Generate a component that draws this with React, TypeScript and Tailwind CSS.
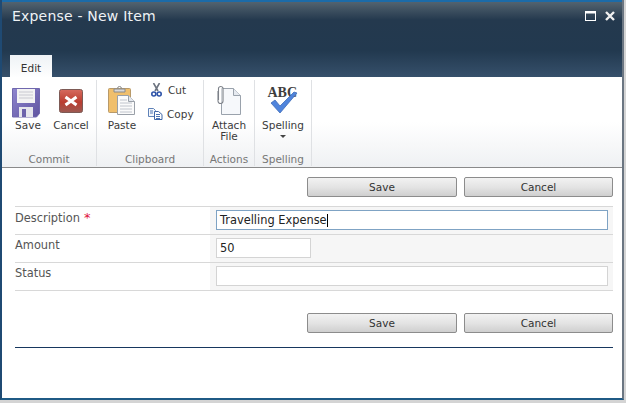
const font = { fontFamily: '"DejaVu Sans", Verdana, sans-serif' };

function SaveIcon() {
  return (
    <svg width="28" height="30" viewBox="0 0 28 30">
      <defs>
        <linearGradient id="sv" x1="0" y1="0" x2="1" y2="1"><stop offset="0" stopColor="#8f86cf" /><stop offset="1" stopColor="#5f549f" /></linearGradient>
      </defs>
      <path d="M.5.5h27v25l-3 3.500H.5z" fill="url(#sv)" stroke="#7068ae" />
      <rect x="5" y="1" width="18" height="14" fill="#f3f3f3" />
      <path d="M7 4h14M7 7h14M7 10h14" stroke="#c9c9d0" />
      <rect x="7" y="19" width="14" height="10" fill="#e6e6ec" />
      <rect x="10" y="21" width="4" height="8" fill="#6d63ab" />
    </svg>
  );
}
function CancelIcon() {
  return (
    <svg width="24" height="24" viewBox="0 0 24 24">
      <defs>
        <linearGradient id="cn" x1="0" y1="0" x2="0" y2="1"><stop offset="0" stopColor="#d66a5e" /><stop offset="0.55" stopColor="#bb3d30" /><stop offset="1" stopColor="#9c5a52" /></linearGradient>
      </defs>
      <rect x="0.5" y="0.5" width="23" height="23" rx="2" fill="url(#cn)" stroke="#7d5a55" />
      <path d="M6.500 8 17.500 16M17.500 8 6.500 16" stroke="#fff" strokeWidth="3" />
    </svg>
  );
}
function PasteIcon() {
  return (
    <svg width="28" height="30" viewBox="0 0 28 30">
      <rect x="0.5" y="3.5" width="22" height="24" rx="1" fill="#f0bf6c" stroke="#b89a6a" />
      <path d="M6 4h11v3H6z" fill="#d8d8d8" stroke="#8a8a8a" />
      <path d="M9.5 3.5a2 2 0 0 1 4 0" fill="none" stroke="#8a8a8a" />
      <path d="M9.5 10.5h11l6 6v13h-17z" fill="#fbfbfb" stroke="#9aa0a8" />
      <path d="M20.5 10.5v6h6" fill="#e4e8ee" stroke="#9aa0a8" />
      <path d="M12 15h7M12 18h12M12 21h12M12 24h12M12 27h12" stroke="#c0c4cc" />
    </svg>
  );
}
function CutIcon() {
  return (
    <svg width="11" height="14" viewBox="0 0 11 14">
      <path d="M2.500 0 7 8M8.500 0 4 8" stroke="#6d7480" strokeWidth="1.6" />
      <circle cx="2.800" cy="11" r="2" fill="none" stroke="#2f54a8" strokeWidth="1.6" />
      <circle cx="8.200" cy="11" r="2" fill="none" stroke="#2f54a8" strokeWidth="1.6" />
    </svg>
  );
}
function CopyIcon() {
  return (
    <svg width="15" height="12" viewBox="0 0 15 12">
      <path d="M.5.5h5l2 2v6h-7z" fill="#f4f7fb" stroke="#5f82b8" />
      <path d="M6.500 3.500h4l3.500 3v5h-7.500z" fill="#fff" stroke="#3f66a8" />
      <path d="M2 3h3M2 5h3M8 6.500h4M8 8.500h4M8 10.500h4" stroke="#4d74b4" />
    </svg>
  );
}
function AttachIcon() {
  return (
    <svg width="26" height="30" viewBox="0 0 26 30">
      <path d="M5.500 3.500h12l7 7v19h-19z" fill="#f6f8fb" stroke="#9aa2ac" />
      <path d="M17.500 3.500v7h7" fill="#e6eaf0" stroke="#9aa2ac" />
      <path d="M2 6v10a2.500 2.500 0 0 0 5 0V3a2.400 2.400 0 0 0-4.500 0v12" fill="#fff" fillOpacity="0.5" stroke="#7c8088" strokeWidth="1.1" />
    </svg>
  );
}
function SpellIcon() {
  return (
    <svg width="32" height="32" viewBox="0 0 32 32">
      <text x="0.500" y="13" fontFamily='"Liberation Serif", serif' fontWeight="700" fontSize="14" fill="#3d3d3d">ABC</text>
      <path d="M4 19l9 10L30 9l-3-1-14 14-5-6z" fill="#4f84dc" stroke="#3f6cb8" strokeWidth="0.8" />
    </svg>
  );
}

function Group({ label, className, children }: { label: string; className: string; children: React.ReactNode }) {
  return (
    <div className={`flex flex-col border-r border-[#dfe1e4] ${className}`}>
      <div className="h-[73px] flex">{children}</div>
      <div className="text-center text-[10.5px] leading-[13px] text-[#777] whitespace-nowrap">{label}</div>
    </div>
  );
}
function Big({ icon, label, className }: { icon: React.ReactNode; label: React.ReactNode; className: string }) {
  return (
    <div className={`flex flex-col items-center text-[10.5px] leading-[11px] text-[#3b3b3b] ${className}`}>
      <div className="h-[33px] flex items-end justify-center">{icon}</div>
      <div className="mt-[2px] text-center whitespace-nowrap">{label}</div>
    </div>
  );
}
function Buttons() {
  const base = "h-[20px] border border-[#8c8c8c] rounded-[2px] bg-gradient-to-b from-[#f2f2f2] via-[#e4e4e4] to-[#cfcfcf] text-[10.5px] leading-[19px] text-center text-[#333]";
  return (
    <div className="flex justify-end gap-[7px] pr-[9px]">
      <div className={`w-[150px] ${base}`}>Save</div>
      <div className={`w-[149px] ${base}`}>Cancel</div>
    </div>
  );
}
function Row({ label, star, bottom, children }: { label: string; star?: boolean; bottom?: boolean; children: React.ReactNode }) {
  return (
    <div className={`flex h-[28px] border-t border-[#d8d8d8] ${bottom ? "border-b h-[29px]" : ""}`}>
      <div className="w-[195px] pt-[3px] text-[11.4px] leading-[15px] text-[#555] whitespace-nowrap">
        {label}{star && <span className="text-[#e0103a] text-[13px]"> *</span>}
      </div>
      <div className="flex-1 bg-[#f6f6f6] pl-[6px] pr-[5px] pt-[3px]">{children}</div>
    </div>
  );
}

export default function App() {
  return (
    <div className="w-[626px] h-[403px] overflow-hidden bg-[#d4d4d4] pr-[2px] pb-[3px]">
      <div style={font} className="h-full bg-white flex flex-col border-l-2 border-r-2 border-b-2 border-l-[#1f4a73] border-r-[#6b7682] border-b-[#1f5a85]">
        <div className="h-[77px] shrink-0 flex flex-col justify-between bg-[linear-gradient(#53636f_0%,#24394e_24%,#22394f_65%,#36506b_100%)] border-t-2 border-[#1c6ba8]">
          <div className="flex justify-between pl-[10px] pr-[7px] pt-[4px]">
            <div className="text-[14px] tracking-[0.2px] leading-[20px] text-[#eef2f5] whitespace-nowrap">Expense - New Item</div>
            <div className="flex items-start gap-[9px] pt-[5px]">
              <svg width="11" height="10" viewBox="0 0 11 10"><rect x="0.500" y="0.500" width="10" height="9" fill="none" stroke="#fff" /><path d="M0 1.500h11" stroke="#fff" strokeWidth="2" /></svg>
              <svg width="10" height="10" viewBox="0 0 10 10"><path d="M1 1l8 8M9 1l-8 8" stroke="#f0f0f0" strokeWidth="2.400" /></svg>
            </div>
          </div>
          <div className="ml-[8px] w-[42px] h-[23px] bg-gradient-to-b from-[#eef2f5] to-white text-center text-[10.5px] leading-[27px] text-[#333] -mb-px">Edit</div>
        </div>

        <div className="h-[91px] shrink-0 flex pt-[3px] pb-[1px] bg-gradient-to-b from-white via-white to-[#eff1f3] border-b border-[#8a8a8a]">
          <Group label="Commit" className="w-[95px]">
            <div className="flex pt-[5px]">
              <Big icon={<div className="mr-[5px]"><SaveIcon /></div>} label="Save" className="w-[52px]" />
              <Big icon={<div className="mb-[5px]"><CancelIcon /></div>} label="Cancel" className="w-[34px]" />
            </div>
          </Group>
          <Group label="Clipboard" className="w-[107px]">
            <div className="flex pt-[5px]">
              <Big icon={<div className="mb-[3px]"><PasteIcon /></div>} label="Paste" className="w-[50px]" />
              <div className="flex flex-col gap-[10px] -mt-[2px] text-[10.5px] leading-[14px] text-[#3b3b3b]">
                <div className="flex items-center gap-[6px] pl-[4px]"><CutIcon /><span>Cut</span></div>
                <div className="flex items-center gap-[4px] pl-[1px]"><CopyIcon /><span>Copy</span></div>
              </div>
            </div>
          </Group>
          <Group label="Actions" className="w-[51px]">
            <div className="pt-[5px] w-full"><Big icon={<div className="mb-[3px]"><AttachIcon /></div>} label={<>Attach<br />File</>} className="w-full" /></div>
          </Group>
          <Group label="Spelling" className="w-[57px]">
            <div className="pt-[5px] w-full">
              <Big icon={<div className="mb-[2px]"><SpellIcon /></div>} label={<>Spelling<br /><span className="inline-block w-0 h-0 mb-[2px] border-x-[3px] border-t-[3px] border-x-transparent border-t-[#444]" /></>} className="w-full" />
            </div>
          </Group>
        </div>

        <div className="flex-1 flex flex-col pl-[13px] pt-[9px]">
          <Buttons />
          <div className="mt-[9px] mr-[9px]">
            <Row label="Description" star>
              <div className="h-[20px] border border-[#7fa3c4] bg-white pl-[3px] text-[11.4px] leading-[18px] text-[#222] flex items-center">
                Travelling Expense<span className="w-px h-[13px] bg-black" />
              </div>
            </Row>
            <Row label="Amount">
              <div className="w-[95px] h-[20px] border border-[#d4d4d4] bg-white pl-[3px] text-[11.4px] leading-[18px] text-[#222]">50</div>
            </Row>
            <Row label="Status" bottom>
              <div className="h-[20px] border border-[#d4d4d4] bg-white" />
            </Row>
          </div>
          <div className="mt-[22px]"><Buttons /></div>
          <div className="mt-[14px] mr-[9px] border-t border-[#17375e]" />
        </div>
      </div>
    </div>
  );
}
